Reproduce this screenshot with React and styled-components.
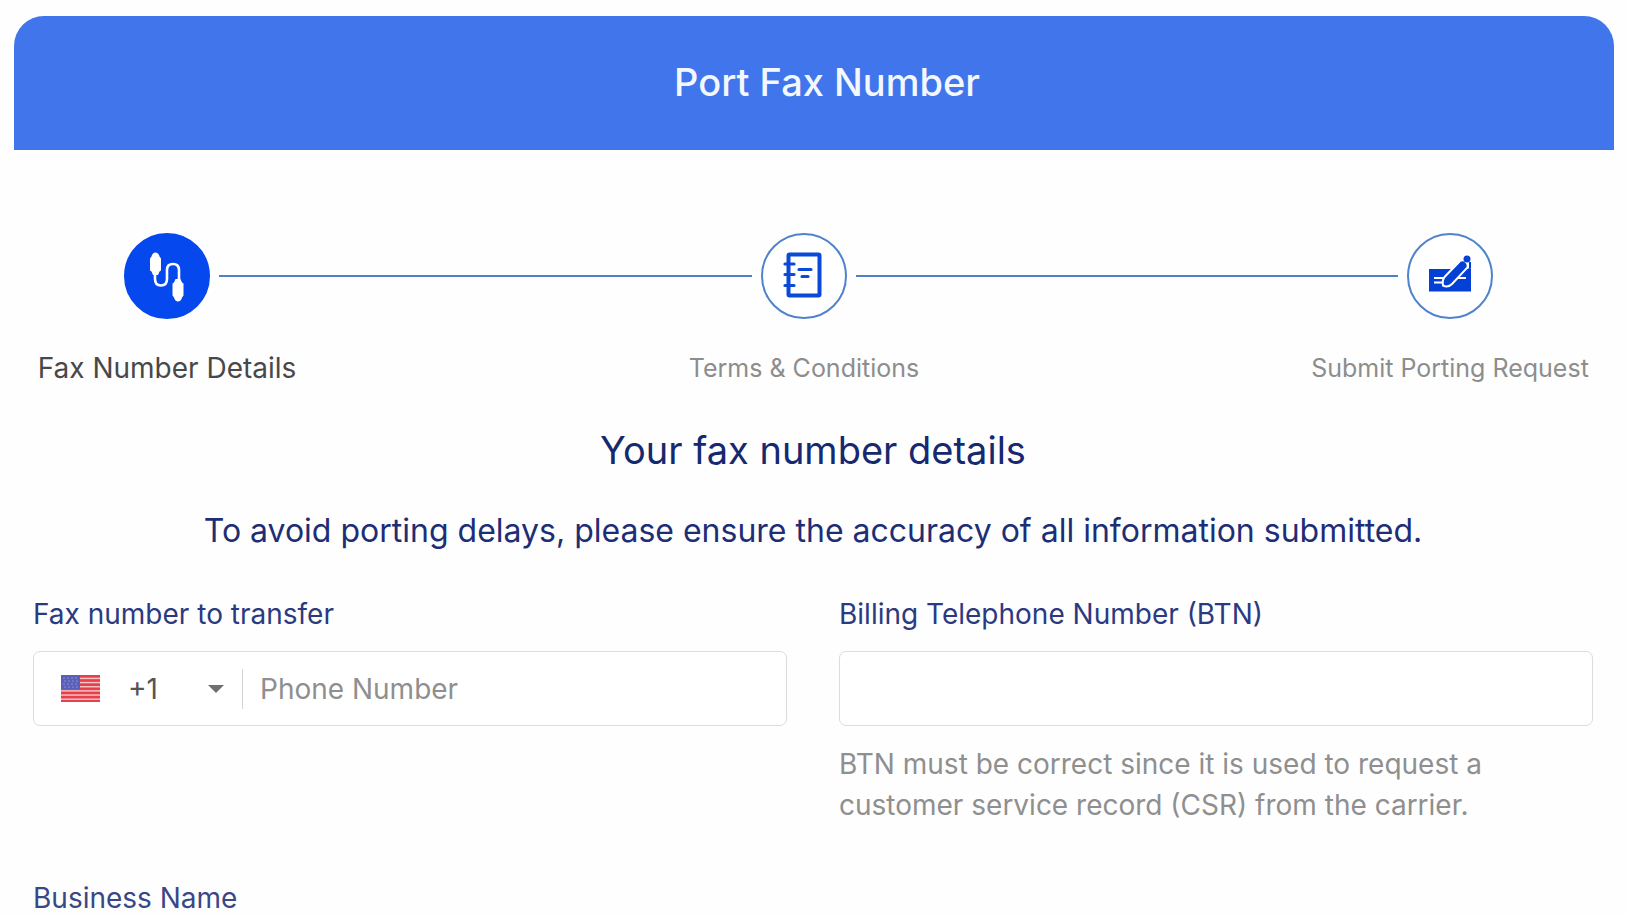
import React, { useState } from "react";
import styled, { createGlobalStyle } from "styled-components";

const steps = [
  { id: "details", label: "Fax Number Details", width: 268, Icon: CableIcon },
  { id: "terms", label: "Terms & Conditions", width: 234, Icon: NotebookIcon },
  { id: "submit", label: "Submit Porting Request", width: 286, Icon: SignIcon },
];

function CableIcon() {
  return (
    <svg width="86" height="86" viewBox="0 0 86 86" aria-hidden="true">
      <path
        d="M31 40V46Q31 52.5 37 52.5T43 46V37Q43 31 49 31T55 37V46"
        fill="none"
        stroke="#fff"
        strokeWidth="2.6"
      />
      <path d="M31.500 19.500q3 0 4 4l1.500 2v12l-1.500 1-1.500 3.500h-5l-1.500-3.500-1.500-1v-12l1.500-2q1-4 4-4z" fill="#fff" />
      <path d="M54 68.500q3 0 4-4l1.500-2v-12l-1.500-1-1.500-3.500h-5l-1.500 3.500-1.500 1v12l1.500 2q1 4 4 4z" fill="#fff" />
    </svg>
  );
}

function NotebookIcon() {
  return (
    <svg width="86" height="86" viewBox="0 0 86 86" aria-hidden="true">
      <g fill="none" stroke="#0b49d8" strokeWidth="4">
        <rect x="27.500" y="21.500" width="31" height="41" rx="1" />
        <path
          d="M24 31h9M24 41.500h9M24 52.500h9M38 36.500h12M41 43.500h6"
          strokeWidth="3.200"
          strokeLinecap="round"
        />
      </g>
    </svg>
  );
}

function SignIcon() {
  return (
    <svg width="86" height="86" viewBox="0 0 86 86" aria-hidden="true">
      <path d="M22 36h42v22.500H22z" fill="#0540d6" />
      <path d="M27 45h11M27 49.500h9M50 45h9" stroke="#fff" strokeWidth="1.800" />
      <path d="M63 29v6l-3 4" fill="none" stroke="#0540d6" strokeWidth="2" />
      <path
        d="M36 52.500q-1-6 2-9L53 28q3-2 6 1t1 6L45 51q-4 4-9 1.500z"
        fill="#0540d6"
        stroke="#fff"
        strokeWidth="2"
      />
      <circle cx="60" cy="26" r="3.500" fill="#0540d6" />
    </svg>
  );
}

function UsFlag() {
  const rows = [0, 2, 4, 6, 8, 10, 12];
  return (
    <Flag viewBox="0 0 39 27" aria-hidden="true">
      <rect width="39" height="27" rx="1" fill="#f7c3c6" />
      {rows.map((row) => (
        <rect key={row} y={(row * 27) / 13} width="39" height="2.700" fill="#e6404b" />
      ))}
      <rect width="19" height="14.500" fill="#5a5fb8" />
      {[2, 5, 8, 11].map((y) =>
        [2, 6, 10, 14].map((x) => (
          <circle key={x + "-" + y} cx={x + (y % 2) + 1} cy={y + 1} r="0.600" fill="#c5c8ee" />
        ))
      )}
    </Flag>
  );
}

function App() {
  const [current] = useState(0);
  const [code, setCode] = useState("+1");
  const [phone, setPhone] = useState("");
  const [btn, setBtn] = useState("");

  return (
    <Page>
      <GlobalStyle />
      <Header>
        <h1>Port Fax Number</h1>
      </Header>
      <Content>
        <Stepper>
          {steps.map(({ id, label, width, Icon }, index) => (
            <React.Fragment key={id}>
              {index > 0 && <Connector aria-hidden="true" />}
              <Step $width={width}>
                <Track>
                  <Line $hidden={index === 0} />
                  <Circle $active={index === current}>
                    <Icon />
                  </Circle>
                  <Line $hidden={index === steps.length - 1} />
                </Track>
                <StepLabel $active={index === current}>{label}</StepLabel>
              </Step>
            </React.Fragment>
          ))}
        </Stepper>

        <Title>Your fax number details</Title>
        <Notice>
          To avoid porting delays, please ensure the accuracy of all information submitted.
        </Notice>

        <Fields>
          <Field>
            <label htmlFor="phone">Fax number to transfer</label>
            <InputBox>
              <UsFlag />
              <CodeSelect
                aria-label="Country code"
                value={code}
                onChange={(e) => setCode(e.target.value)}
              >
                <option value="+1">+1</option>
              </CodeSelect>
              <Arrow viewBox="0 0 16 8" aria-hidden="true">
                <path d="M0 0h16L8 8z" fill="#6f6f6f" />
              </Arrow>
              <Divider />
              <TextInput
                id="phone"
                type="tel"
                placeholder="Phone Number"
                value={phone}
                onChange={(e) => setPhone(e.target.value)}
              />
            </InputBox>
          </Field>
          <Field>
            <label htmlFor="btn">Billing Telephone Number (BTN)</label>
            <InputBox>
              <TextInput
                id="btn"
                type="tel"
                aria-describedby="btn-help"
                value={btn}
                onChange={(e) => setBtn(e.target.value)}
              />
            </InputBox>
            <Help id="btn-help">
              BTN must be correct since it is used to request a customer service record (CSR)
              from the carrier.
            </Help>
          </Field>
        </Fields>
        <SectionName>Business Name</SectionName>
      </Content>
    </Page>
  );
}

export default App;

const GlobalStyle = createGlobalStyle`
  * {
    box-sizing: border-box;
  }
  body {
    margin: 0;
    background-color: #fefefe;
    font-family: Inter, "Liberation Sans", sans-serif;
    font-optical-sizing: none;
  }
  h1, h2, h3, p, ol {
    margin: 0;
    padding: 0;
  }
  input, select {
    font: inherit;
    font-optical-sizing: inherit;
  }
`;

const Page = styled.main`
  padding: 16px 14px 0;
`;

const Header = styled.header`
  display: flex;
  justify-content: center;
  align-items: center;
  height: 134px;
  padding: 0 0 2px 26px;
  border-radius: 30px 30px 0 0;
  background-color: #4075ec;
  h1 {
    color: #f3f8ff;
    font-size: 38px;
    font-weight: 500;
    line-height: 44px;
  }
`;

const Content = styled.div`
  padding: 83px 21px 0 19px;
`;

const Stepper = styled.ol`
  display: flex;
  list-style: none;
`;

const Step = styled.li`
  display: flex;
  flex-direction: column;
  gap: 28px;
  min-width: ${(props) => props.$width}px;
`;

const Track = styled.div`
  display: flex;
  align-items: center;
  gap: 9px;
`;

const Line = styled.span`
  flex: 1;
  height: 2px;
  background-color: ${(props) => (props.$hidden ? "transparent" : "#4f7fc4")};
`;

const Connector = styled.li`
  flex: 1;
  height: 2px;
  margin-top: 42px;
  background-color: #4f7fc4;
`;

const Circle = styled.span`
  display: flex;
  justify-content: center;
  align-items: center;
  width: 86px;
  height: 86px;
  border: 2px solid ${(props) => (props.$active ? "#0548ee" : "#4f83cc")};
  border-radius: 50%;
  background-color: ${(props) => (props.$active ? "#0548ee" : "#fff")};
  svg {
    flex: none;
  }
`;

const StepLabel = styled.span`
  color: ${(props) => (props.$active ? "#484848" : "#8d8d8d")};
  font-size: ${(props) => (props.$active ? "28px" : "25px")};
  line-height: 42px;
  text-align: center;
  white-space: nowrap;
`;

const Title = styled.h2`
  margin-top: 38px;
  color: #16296f;
  font-size: 38px;
  font-weight: 400;
  line-height: 46px;
  text-align: center;
`;

const Notice = styled.p`
  margin-top: 38px;
  color: #1d2e76;
  font-size: 32px;
  line-height: 40px;
  text-align: center;
`;

const Fields = styled.div`
  display: grid;
  grid-template-columns: 1fr 1fr;
  gap: 52px;
`;

const Field = styled.div`
  display: flex;
  flex-direction: column;
  margin-top: 43px;
  label {
    color: #2b3a80;
    font-size: 28px;
    line-height: 40px;
  }
`;

const InputBox = styled.div`
  display: flex;
  align-items: center;
  height: 75px;
  margin-top: 17px;
  padding: 0 18px 0 27px;
  border: 1px solid #dcdcdc;
  border-radius: 7px;
  background-color: #fff;
`;

const Flag = styled.svg`
  flex: none;
  width: 39px;
  height: 27px;
`;

const CodeSelect = styled.select`
  width: 80px;
  margin-left: 28px;
  padding: 0;
  border: none;
  outline: none;
  appearance: none;
  background: none;
  color: #555;
  font-size: 28px;
  line-height: 40px;
`;

const Arrow = styled.svg`
  flex: none;
  width: 16px;
  height: 8px;
  pointer-events: none;
`;

const Divider = styled.span`
  flex: none;
  width: 1px;
  height: 40px;
  margin: 0 17px 0 18px;
  background-color: #d4d4d4;
`;

const TextInput = styled.input`
  flex: 1;
  min-width: 0;
  padding: 0;
  border: none;
  outline: none;
  background: none;
  color: #555;
  font-size: 28px;
  line-height: 40px;
  &::placeholder {
    color: #8f8f8f;
    opacity: 1;
  }
`;

const Help = styled.p`
  margin-top: 18px;
  color: #8f8f8f;
  font-size: 28px;
  line-height: 41px;
`;

const SectionName = styled.h3`
  margin-top: 52px;
  color: #3a4786;
  font-size: 28px;
  font-weight: 400;
  line-height: 40px;
`;
